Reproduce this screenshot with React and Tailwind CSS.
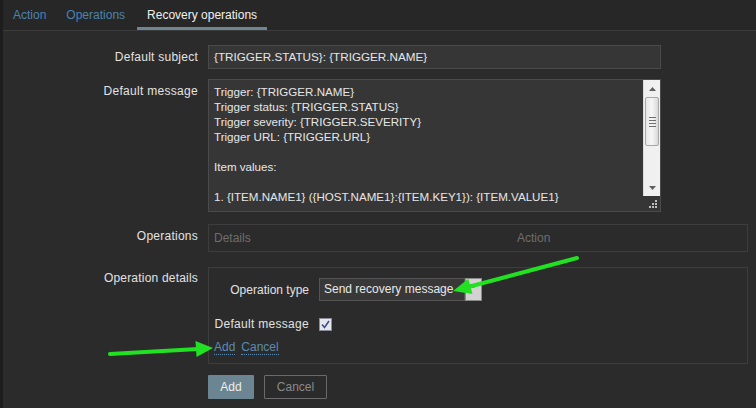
import React from "react";

const lines = [
  "Trigger: {TRIGGER.NAME}",
  "Trigger status: {TRIGGER.STATUS}",
  "Trigger severity: {TRIGGER.SEVERITY}",
  "Trigger URL: {TRIGGER.URL}",
  "",
  "Item values:",
  "",
  "1. {ITEM.NAME1} ({HOST.NAME1}:{ITEM.KEY1}): {ITEM.VALUE1}",
];

function Scrollbar() {
  return (
    <div className="flex flex-col w-[17px] h-full">
      <div className="flex flex-col flex-1 bg-[#f0f0f0] border-l border-[#dcdcdc]">
        <div className="h-[17px] flex items-center justify-center">
          <svg width="7" height="4" viewBox="0 0 7 4"><path d="M0 4 L3.5 0 L7 4 Z" fill="#606060" /></svg>
        </div>
        <div className="mx-[1px] h-[49px] bg-gradient-to-r from-[#e8e8e8] via-[#f6f6f6] to-[#d8d8d8] border border-[#a8a8a8] rounded-[2px] flex items-center justify-center">
          <div className="flex flex-col gap-[2px]">
            <div className="w-[7px] h-[1px] bg-[#707070]" />
            <div className="w-[7px] h-[1px] bg-[#707070]" />
            <div className="w-[7px] h-[1px] bg-[#707070]" />
            <div className="w-[7px] h-[1px] bg-[#707070]" />
          </div>
        </div>
        <div className="flex-1" />
        <div className="h-[17px] flex items-center justify-center">
          <svg width="7" height="4" viewBox="0 0 7 4"><path d="M0 0 L3.5 4 L7 0 Z" fill="#606060" /></svg>
        </div>
      </div>
      <div className="h-[15px] flex items-end justify-end pr-[3px] pb-[3px]">
        <svg width="8" height="8" viewBox="0 0 8 8" fill="#bdbdbd">
          <rect x="6" y="0" width="2" height="2" />
          <rect x="3" y="3" width="2" height="2" />
          <rect x="6" y="3" width="2" height="2" />
          <rect x="0" y="6" width="2" height="2" />
          <rect x="3" y="6" width="2" height="2" />
          <rect x="6" y="6" width="2" height="2" />
        </svg>
      </div>
    </div>
  );
}

export default function App() {
  return (
    <div className="relative w-[756px] h-[408px] overflow-hidden bg-[#2b2b2b] flex font-['Liberation_Sans',Arial,sans-serif] text-[12px] text-[#e2e2e2]">
      <div className="w-[3px] h-full bg-[#1d1d1d] shrink-0" />
      <div className="flex-1 flex flex-col">
        {/* Tabs */}
        <div className="h-[31px] flex border-b border-[#3c3c3c] bg-[#272727]">
          <div className="px-[10px] flex items-center text-[#4a84b0] pb-[1px]">Action</div>
          <div className="px-[10px] flex items-center text-[#4a84b0] pb-[1px]">Operations</div>
          <div className="px-[10px] ml-[2px] flex items-center text-[#f0f0f0] border-b-[3px] border-[#6f8590] pt-[2px]">Recovery operations</div>
        </div>

        <div className="flex flex-col pt-[14px]">
          {/* Default subject */}
          <div className="flex gap-[10px]">
            <div className="w-[195px] text-right leading-[24px] tracking-[0.25px]">Default subject</div>
            <div className="w-[453px] h-[24px] bg-[#363636] border border-[#4a4a4a] px-[5px] leading-[22px] text-[#e6e6e6] text-[11.7px]">
              {"{TRIGGER.STATUS}: {TRIGGER.NAME}"}
            </div>
          </div>

          {/* Default message */}
          <div className="flex gap-[10px] mt-[10px]">
            <div className="w-[195px] text-right pt-[5px] leading-[15px] tracking-[0.3px]">Default message</div>
            <div className="w-[453px] h-[133px] bg-[#363636] border border-[#4a4a4a] flex">
              <div className="flex-1 pl-[5px] pt-[4px] leading-[15px] text-[#e6e6e6] text-[11.6px] overflow-hidden">
                {lines.map((l, i) => (
                  <div key={i} className="h-[15px] whitespace-nowrap">{l}</div>
                ))}
              </div>
              <Scrollbar />
            </div>
          </div>

          {/* Operations */}
          <div className="flex gap-[10px] mt-[12px]">
            <div className="w-[195px] text-right pt-[5px] leading-[15px] tracking-[0.25px]">Operations</div>
            <div className="w-[540px] h-[28px] border border-[#3d3d3d] flex items-center pl-[5px] text-[#6e6e6e]">
              <div className="w-[303px]">Details</div>
              <div>Action</div>
            </div>
          </div>

          {/* Operation details */}
          <div className="flex gap-[10px] mt-[15px]">
            <div className="w-[195px] text-right pt-[4px] leading-[15px] tracking-[0.2px]">Operation details</div>
            <div className="w-[540px] h-[97px] border border-[#3d3d3d] pl-[5px] pt-[10px] flex flex-col">
              <div className="flex gap-[10px] items-center">
                <div className="w-[95px] text-right">Operation type</div>
                <div className="flex h-[23px]">
                  <div className="w-[146px] h-[23px] bg-[#383838] border border-[#555555] px-[4px] leading-[21px] text-[#e8e8e8] whitespace-nowrap">
                    Send recovery message
                  </div>
                  <div className="w-[17px] h-[23px] bg-[#d2d2d2] border border-[#8a8a8a] flex justify-center pt-[5px]">
                    <svg width="7" height="4" viewBox="0 0 7 4"><path d="M0 0 L3.5 4 L7 0 Z" fill="#111" /></svg>
                  </div>
                </div>
              </div>
              <div className="flex gap-[10px] items-center mt-[11px] h-[24px]">
                <div className="w-[95px] text-right whitespace-nowrap tracking-[0.3px]">Default message</div>
                <div className="w-[13px] h-[13px] bg-[#e6e6ee] border border-[#8a8a9a] flex items-center justify-center">
                  <svg width="9" height="9" viewBox="0 0 9 9">
                    <path d="M1 4.5 L3.5 7.5 L8 1" stroke="#3d4f86" strokeWidth="1.6" fill="none" />
                  </svg>
                </div>
              </div>
              <div className="flex gap-[6px] mt-[5px] leading-[15px] text-[#5a8cb2]">
                <span className="border-b border-dotted border-[#5a8cb2] leading-[13px]">Add</span>
                <span className="border-b border-dotted border-[#5a8cb2] leading-[13px]">Cancel</span>
              </div>
            </div>
          </div>

          {/* Buttons */}
          <div className="flex gap-[10px] mt-[11px] pl-[205px]">
            <div className="w-[46px] h-[24px] bg-[#6c8592] flex items-center justify-center text-[#eeeeee] rounded-[1px]">Add</div>
            <div className="w-[63px] h-[24px] border border-[#6a6a6a] flex items-center justify-center text-[#8a8a8a] rounded-[1px]">Cancel</div>
          </div>
        </div>
      </div>

      {/* Annotation arrows */}
      <svg className="absolute left-0 top-0 pointer-events-none" width="756" height="408" viewBox="0 0 756 408">
        <line x1="577" y1="258" x2="468" y2="287" stroke="#22e022" strokeWidth="4" strokeLinecap="round" />
        <polygon points="453,291 468.3,278.7 472.5,294.1" fill="#22e022" />
        <line x1="110" y1="354" x2="198" y2="349" stroke="#22e022" strokeWidth="4" strokeLinecap="round" />
        <polygon points="213,348 195.5,341 196.5,357" fill="#22e022" />
      </svg>
    </div>
  );
}
